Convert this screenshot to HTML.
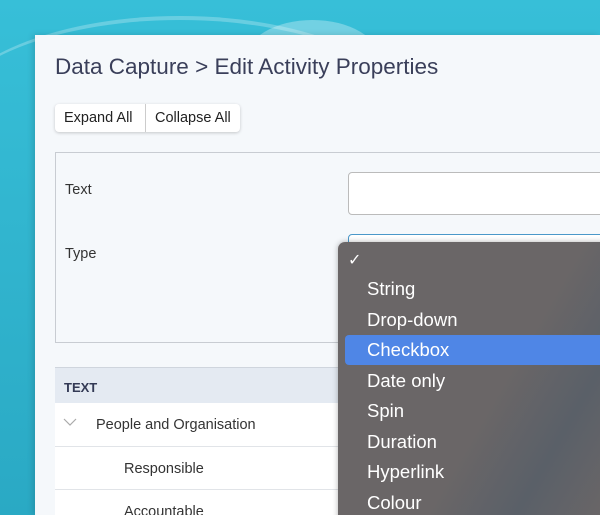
<!DOCTYPE html>
<html style="overflow:hidden;width:600px;height:515px"><head><style>
*{margin:0;padding:0;box-sizing:border-box}
body{width:600px;height:515px;overflow:hidden;position:relative;font-family:"Liberation Sans",sans-serif;background:linear-gradient(180deg,#37bfd8 0%,#2aa9c4 100%)}
.arc{position:absolute;left:-60px;top:16px;width:480px;height:220px;border-top:4px solid rgba(255,255,255,.25);border-radius:50%}
.blob{position:absolute;left:245px;top:20px;width:135px;height:80px;border-radius:50%;background:rgba(255,255,255,.3)}
.panel{position:absolute;left:35px;top:35px;width:565px;height:480px;background:#f5f8fb;box-shadow:-2px 0 6px rgba(0,0,0,.15)}
.t{position:absolute;white-space:nowrap}
.title{left:55px;top:54px;font-size:22.5px;color:#3a3f5a}
.btns{position:absolute;left:55px;top:104px;height:28px;background:#fff;border-radius:4px;box-shadow:0 1px 3px rgba(0,0,0,.2);display:flex;font-size:14.5px;color:#222}
.btns div{padding:6px 9px 0}
.btns div:first-child{border-right:1px solid #ccc;width:91px}
.form{position:absolute;left:55px;top:152px;width:560px;height:191px;border:1px solid #c8ccd2}
.lab{font-size:14.5px;color:#333}
.inp{position:absolute;left:348px;top:172px;width:270px;height:43px;border:1px solid #bbb;border-radius:4px;background:#fff}
.sel{position:absolute;left:348px;top:234px;width:270px;height:43px;border:1px solid #4a98c9;border-radius:4px;background:#fff}
.th{position:absolute;left:55px;top:367px;width:560px;height:36px;background:#e4eaf2;border-top:1px solid #cfd5dd}
.row{position:absolute;left:55px;width:560px;background:#fff;border-bottom:1px solid #e1e4e8}
.dd{position:absolute;left:338px;top:242px;width:280px;height:290px;background:linear-gradient(120deg,#6a6667 55%,#5a6068 75%,#6a6667 95%);border-radius:7px;box-shadow:0 0 6px rgba(0,0,0,.3);color:#fff;font-size:18.5px}
.dd .i{position:absolute;left:29px}
.hl{position:absolute;left:7px;top:93px;width:280px;height:30px;background:#4f86e6;border-radius:4px}
</style></head><body>
<div class="arc"></div><div class="blob"></div>
<div class="panel"></div>
<div class="t title">Data Capture &gt; Edit Activity Properties</div>
<div class="btns"><div>Expand All</div><div>Collapse All</div></div>
<div class="form"></div>
<div class="t lab" style="left:65px;top:182px">Text</div>
<div class="inp"></div>
<div class="t lab" style="left:65px;top:246px">Type</div>
<div class="sel"></div>
<div class="th"><div class="t" style="left:9px;top:12px;font-size:13px;font-weight:bold;color:#333a55">TEXT</div></div>
<div class="row" style="top:403px;height:44px"><svg class="t" style="left:8px;top:15px" width="14" height="9"><path d="M1 1L7 7L13 1" fill="none" stroke="#aaa" stroke-width="1.2"/></svg><div class="t lab" style="left:41px;top:14px">People and Organisation</div></div>
<div class="row" style="top:447px;height:43px"><div class="t lab" style="left:69px;top:14px">Responsible</div></div>
<div class="row" style="top:490px;height:43px"><div class="t lab" style="left:69px;top:14px">Accountable</div></div>
<div class="dd">
<div class="hl"></div>
<div class="t" style="left:10px;top:8px;font-size:16px">✓</div>
<div class="i" style="top:36px">String</div>
<div class="i" style="top:67px">Drop-down</div>
<div class="i" style="top:97px">Checkbox</div>
<div class="i" style="top:128px">Date only</div>
<div class="i" style="top:158px">Spin</div>
<div class="i" style="top:189px">Duration</div>
<div class="i" style="top:219px">Hyperlink</div>
<div class="i" style="top:250px">Colour</div>
</div>
</body></html>
